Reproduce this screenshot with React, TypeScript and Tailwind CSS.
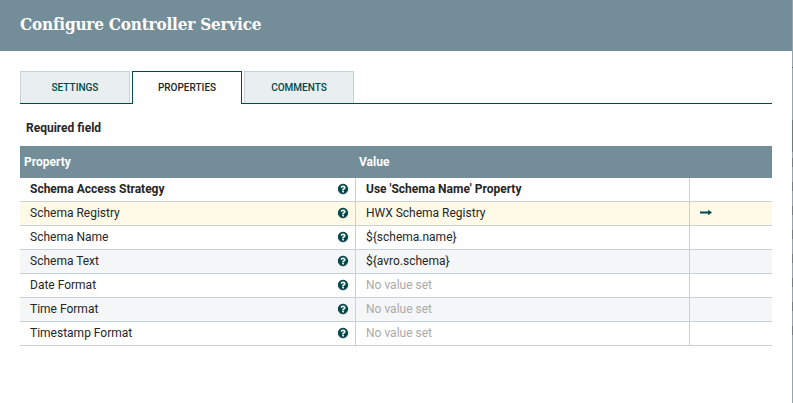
const rows = [
  { name: 'Schema Access Strategy', value: "Use 'Schema Name' Property", style: 'bg-white font-bold' },
  { name: 'Schema Registry', value: 'HWX Schema Registry', style: 'bg-[#fffae8]', link: true },
  { name: 'Schema Name', value: '${schema.name}', style: 'bg-white' },
  { name: 'Schema Text', value: '${avro.schema}', style: 'bg-[#f4f6f7]' },
  { name: 'Date Format', style: 'bg-white' },
  { name: 'Time Format', style: 'bg-[#f4f6f7]' },
  { name: 'Timestamp Format', style: 'bg-white' },
];

function HelpIcon() {
  return (
    <svg className="block size-3 shrink-0" viewBox="0 0 1792 1792" fill="#004849">
      <path d="M1024 1376v-192q0-14-9-23t-23-9h-192q-14 0-23 9t-9 23v192q0 14 9 23t23 9h192q14 0 23-9t9-23zm256-672q0-88-55.5-163t-138.5-116-170-41q-243 0-371 213-15 24 8 42l132 100q7 6 19 6 16 0 25-12 53-68 86-92 34-24 86-24 48 0 85.5 26t37.5 59q0 38-20 61t-68 45q-63 28-115.5 86.5t-52.5 125.5v36q0 14 9 23t23 9h192q14 0 23-9t9-23q0-19 21.5-49.5t54.5-49.5q32-18 49-28.5t46-35 44.5-48 28-60.5 12.5-81zm384 192q0 209-103 385.5t-279.5 279.5-385.5 103-385.5-103-279.5-279.5-103-385.5 103-385.5 279.5-279.5 385.5-103 385.5 103 279.5 279.5 103 385.5z" />
    </svg>
  );
}

function ArrowIcon() {
  return (
    <svg className="block h-[7px] w-3" viewBox="0 0 12 7" fill="#004849">
      <path d="M0 2.6h8.2V.7L12 3.5 8.2 6.3V4.4H0z" />
    </svg>
  );
}

function Tab({ label, active = false }: { label: string; active?: boolean }) {
  return (
    <div
      className={
        active
          ? 'mb-[-1px] flex h-[33px] w-[110px] items-center justify-center border border-b-0 border-[#004849] bg-white text-[#262626]'
          : 'flex h-8 w-[110px] items-center justify-center border border-b-0 border-[#c7d2d7] bg-[#e9eef0] text-[#004849]'
      }
    >
      {label}
    </div>
  );
}

export default function App() {
  return (
    <div className="flex h-[403px] w-[793px] overflow-hidden bg-white font-['Roboto',sans-serif] text-[13px] text-[#262626]">
      <div className="w-[792px] shrink-0">
        <header className="flex h-[51px] items-center bg-[#748e99] px-5 pb-[3px]">
          <h1 className="whitespace-nowrap font-['Roboto_Slab','DejaVu_Serif_Condensed','DejaVu_Serif',serif] text-[17px] leading-6 font-bold tracking-[-0.2px] text-white">
            Configure Controller Service
          </h1>
        </header>
        <main className="px-5 pt-5">
          <nav className="flex h-[33px] gap-[2px] border-b border-[#004849] text-[10px] leading-4 font-medium">
            <Tab label="SETTINGS" />
            <Tab label="PROPERTIES" active />
            <Tab label="COMMENTS" />
          </nav>
          <div className="mt-4 mb-[10px] pl-[6px] text-[12px] leading-4 font-bold">Required field</div>
          <div className="flex h-8 items-center bg-[#748e99] text-[12px] font-bold text-white">
            <div className="w-[335px] pl-1">Property</div>
            <div className="pl-1">Value</div>
          </div>
          {rows.map((row) => (
            <div key={row.name} className={`flex h-6 border-b border-[#c7d2d7] text-[12px] leading-4 ${row.style}`}>
              <div className="flex w-[336px] items-center justify-between border-r border-[#c7d2d7] pr-[6px] pb-px pl-[10px]">
                <span>{row.name}</span>
                <HelpIcon />
              </div>
              <div className="flex w-[334px] items-center border-r border-[#c7d2d7] pb-px pl-[10px]">
                {row.value ? <span>{row.value}</span> : <span className="text-[#aaaaaa]">No value set</span>}
              </div>
              <div className="flex items-center pb-[2px] pl-[10px]">{row.link && <ArrowIcon />}</div>
            </div>
          ))}
        </main>
      </div>
      <div className="flex w-px flex-col bg-[#95a5ad]">
        <div className="mt-[67px] h-px bg-[#59666b]" />
        <div className="mt-[52px] h-8 bg-[#70797c]" />
        {rows.map((row) => (
          <div key={row.name} className="mt-[6px] mb-[9px] h-[9px] bg-[#747d80]" />
        ))}
        <div className="mt-[6px] h-[9px] bg-[#747d80]" />
      </div>
    </div>
  );
}
